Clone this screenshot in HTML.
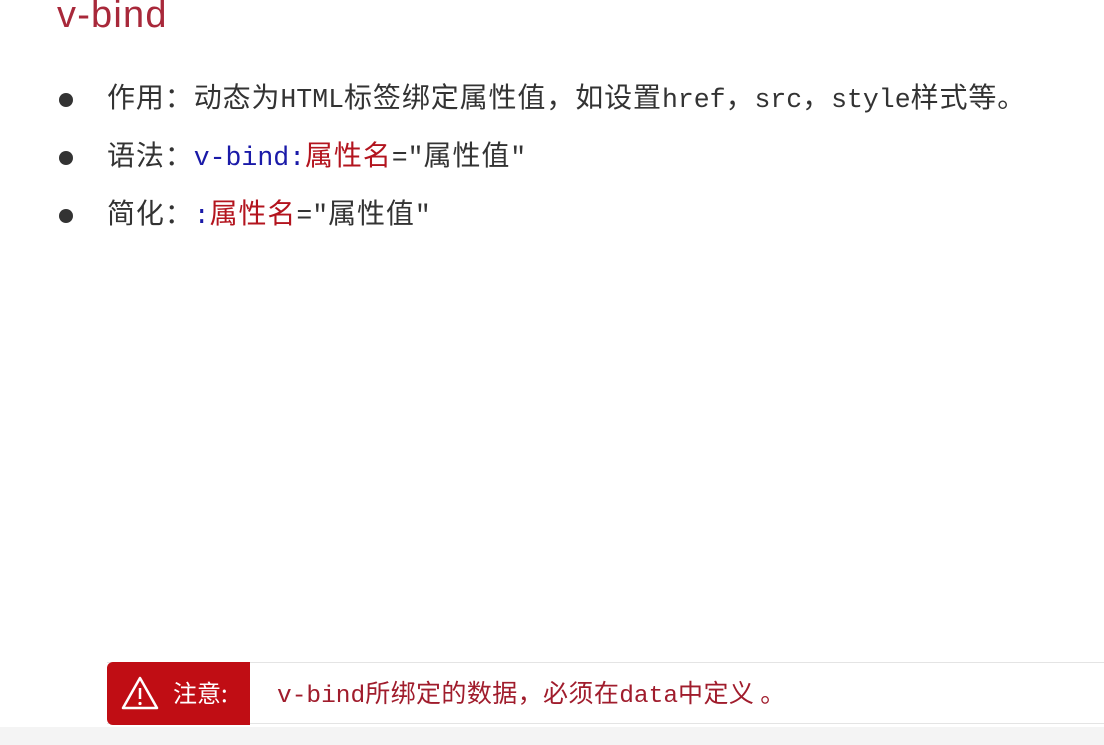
<!DOCTYPE html>
<html><head><meta charset="utf-8"><style>
body{margin:0;width:1104px;height:745px;background:#fff;position:relative;overflow:hidden;font-family:"Noto Sans CJK SC",sans-serif;}
.m{font-family:"Liberation Mono",monospace;font-size:26.5px;letter-spacing:0;}
.title{position:absolute;left:57px;top:-4px;font:38px/38px "Liberation Sans",sans-serif;letter-spacing:1.2px;color:#a8283a;}
.li{position:absolute;left:107px;font-size:28px;letter-spacing:0.9px;color:#333;line-height:32px;white-space:nowrap;}
.li:before{content:"";position:absolute;left:-48px;top:13px;width:14px;height:14px;border-radius:50%;background:#333;}
.b{color:#1a1aa8}.r{color:#b3141e}
.foot{position:absolute;left:0;top:727px;width:1104px;height:18px;background:#f4f4f4;}
.note{position:absolute;left:107px;top:662px;width:997px;height:62px;border-top:1px solid #e4e4e4;border-bottom:1px solid #e4e4e4;box-sizing:border-box;}
.tag{position:absolute;left:0;top:-1px;width:143px;height:63px;background:#c00d14;border-radius:6px 0 0 6px;color:#fff;}
.tag span{position:absolute;left:66px;top:15px;font:24px "Noto Sans CJK SC",sans-serif;line-height:30px;}
.msg{position:absolute;left:170px;top:14px;font-size:25px;letter-spacing:0.4px;color:#a01c2c;line-height:30px;white-space:nowrap;}
.msg .m{font-size:24.5px;}
</style></head><body>
<div class="title">v-bind</div>
<div class="li" style="top:80px">作用：动态为<span class="m">HTML</span>标签绑定属性值，如设置<span class="m">href</span>，<span class="m">src</span>，<span class="m">style</span>样式等。</div>
<div class="li" style="top:138px">语法：<span class="m b">v-bind:</span><span class="r">属性名</span><span class="m">="</span>属性值<span class="m">"</span></div>
<div class="li" style="top:196px">简化：<span class="m b">:</span><span class="r">属性名</span><span class="m">="</span>属性值<span class="m">"</span></div>
<div class="note">
<div class="tag"><svg style="position:absolute;left:13px;top:13px" width="40" height="36" viewBox="0 0 40 36"><path d="M20 3 L37 33 L3 33 Z" fill="none" stroke="#fff" stroke-width="2.5" stroke-linejoin="round"/><line x1="20" y1="13" x2="20" y2="24" stroke="#fff" stroke-width="2.5"/><circle cx="20" cy="28.5" r="1.6" fill="#fff"/></svg><span>注意:</span></div>
<div class="msg"><span class="m">v-bind</span>所绑定的数据，必须在<span class="m">data</span>中定义 。</div>
</div>
<div class="foot"></div>
</body></html>
